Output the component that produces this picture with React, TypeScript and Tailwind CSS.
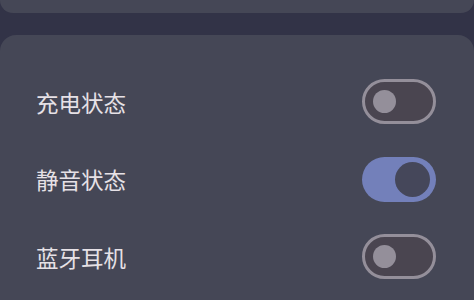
import React from "react";

function Switch({ on }: { on: boolean }) {
  if (on) {
    return (
      <div className="w-[74px] h-[45px] rounded-full bg-[#7380ba] flex items-center justify-end pr-[6px] box-border">
        <div className="w-[35px] h-[35px] rounded-full bg-[#45475a]" />
      </div>
    );
  }
  return (
    <div className="w-[74px] h-[45px] rounded-full bg-[#4a4550] border-[3px] border-[#948f9a] flex items-center pl-[8px] box-border">
      <div className="w-[23px] h-[23px] rounded-full bg-[#948f9a]" />
    </div>
  );
}

const rows = [
  { label: "充电状态", on: false },
  { label: "静音状态", on: true },
  { label: "蓝牙耳机", on: false },
];

export default function App() {
  return (
    <div
      className="w-[474px] h-[300px] bg-[#323347] overflow-hidden flex flex-col gap-[22px]"
      style={{ fontFamily: '"Noto Sans CJK SC", "Noto Sans", sans-serif' }}
    >
      <div className="h-[13px] shrink-0 bg-[#454756] rounded-b-[16px]" />
      <div className="flex-1 bg-[#454756] rounded-t-[16px] pt-[28px] flex flex-col">
        {rows.map((r) => (
          <div key={r.label} className="h-[77.5px] shrink-0 flex items-center justify-between pl-[36px] pr-[38px]">
            <span className="text-[22.5px] leading-none text-[#e6e1e6]">{r.label}</span>
            <Switch on={r.on} />
          </div>
        ))}
      </div>
    </div>
  );
}
